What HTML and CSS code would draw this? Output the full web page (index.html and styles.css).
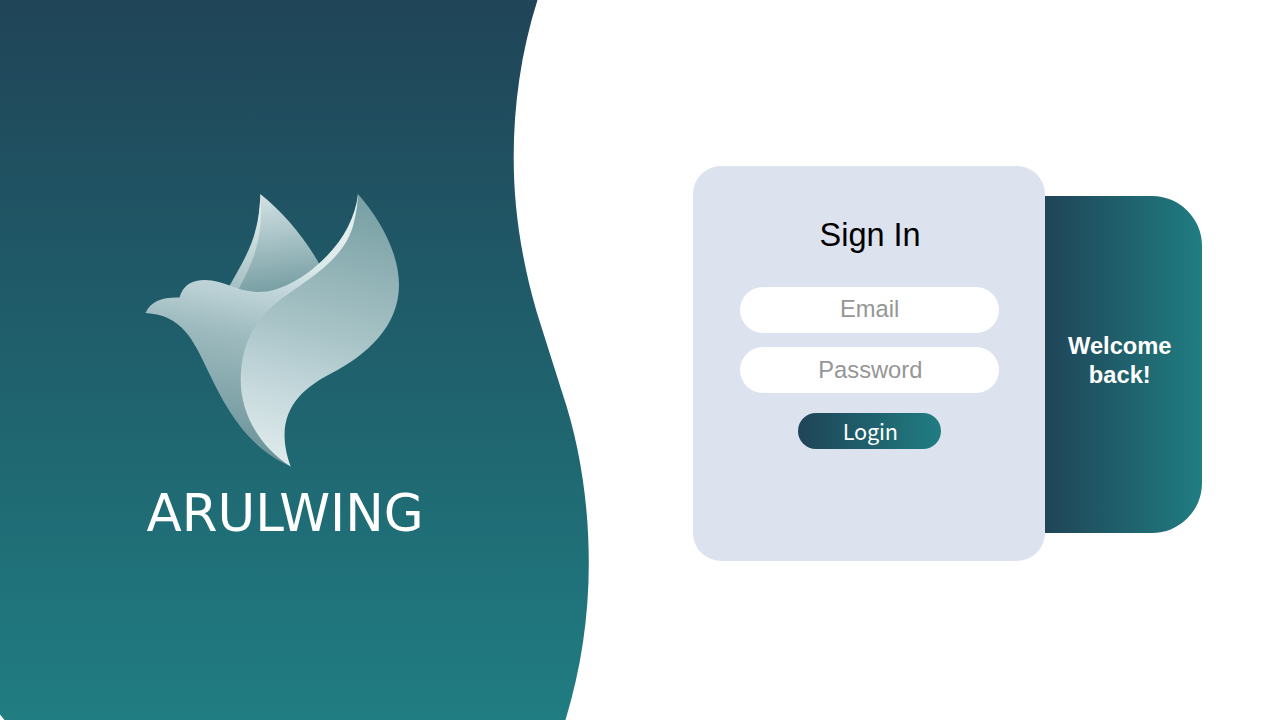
FILE: index.html
```html
<!DOCTYPE html>
<html lang="en">
<head>
<meta charset="utf-8">
<title>Arulwing – Sign In</title>
<link rel="stylesheet" href="styles.css">
</head>
<body>
<main class="page">
  <section class="brand">
    <svg class="brand-bg" viewBox="0 0 590 720" aria-hidden="true">
      <defs><linearGradient id="bg" x1="0" y1="0" x2="0" y2="1"><stop offset="0" stop-color="#204458"/><stop offset=".5" stop-color="#1f606c"/><stop offset="1" stop-color="#207d82"/></linearGradient></defs>
      <path fill="url(#bg)" d="M0 0H537.5C521 52 513.7 105 513.7 158C513.7 207 521 258 537 313L562 392C580 445 588.8 504 588.8 563C588.8 617 581 669 565.5 720H4.5L0 714.5Z"/>
    </svg>
    <div class="brand-inner">
      <svg class="logo" viewBox="140 190 264 280" role="img" aria-label="Bird">
        <defs>
          <linearGradient id="back" gradientUnits="userSpaceOnUse" x1="265" y1="194" x2="278" y2="292"><stop offset="0" stop-color="#d3e2e4"/><stop offset="1" stop-color="#769ea3"/></linearGradient>
          <linearGradient id="edge" gradientUnits="userSpaceOnUse" x1="262" y1="205" x2="236" y2="290"><stop offset="0" stop-color="#e3eeee"/><stop offset="1" stop-color="#a3bfc3"/></linearGradient>
          <linearGradient id="body" gradientUnits="userSpaceOnUse" x1="290" y1="230" x2="250" y2="450"><stop offset="0" stop-color="#e2eded"/><stop offset=".14" stop-color="#dce9e9"/><stop offset=".28" stop-color="#c1d5d9"/><stop offset=".5" stop-color="#9ebbbf"/><stop offset="1" stop-color="#6d959b"/></linearGradient>
          <linearGradient id="front" gradientUnits="userSpaceOnUse" x1="345" y1="205" x2="280" y2="460"><stop offset="0" stop-color="#7ba2a6"/><stop offset=".5" stop-color="#a9c4c7"/><stop offset=".75" stop-color="#c6d9dd"/><stop offset="1" stop-color="#deeaea"/></linearGradient>
        </defs>
        <path fill="url(#back)" d="M260.3 194C284 213 304 237 320 265L290 292L250 298L230 286C247 256 260 237 260.3 194Z"/>
        <path fill="url(#edge)" d="M260.3 194C259.5 237 245 258 229.5 286L238 290C252 264 264 240 260.3 194Z"/>
        <path fill="url(#body)" d="M145.5 313C151 301 162 297 179.500 297.500C183 285 192 280 205 280C224 280 237 292 259 292C279 292 302 279 319 263.500C341 244 355 220 358 194L360 230L275 340L262 438L290.700 466.500C249 448 228 413 209 373C193 339 182 315 145.500 313Z"/>
        <path fill="url(#front)" d="M358 194C378 217 399 251 399 285C399 326 367 355 331 373.500C299 390 272 415 290.700 466.500C257 445 240.700 411 240.700 380C240.700 347 253 323 275 304C301 282 345 263 354 222C356.500 212 357.700 203 358 194Z"/>
      </svg>
      <h1 class="brand-name">ARULWING</h1>
    </div>
  </section>
  <section class="auth">
    <form class="card">
      <h2 class="title">Sign In</h2>
      <input class="field" type="text" placeholder="Email" aria-label="Email">
      <input class="field field-password" type="password" placeholder="Password" aria-label="Password">
      <button class="login" type="button">Login</button>
    </form>
    <aside class="welcome">Welcome<br>back!</aside>
  </section>
</main>
</body>
</html>
```
FILE: styles.css
```css
* { box-sizing: border-box; }
body { margin: 0; background: #fff; font-family: "Liberation Sans", Arial, sans-serif; overflow: hidden; }
.page { display: flex; width: 1280px; height: 720px; }
.brand { position: relative; width: 590px; height: 720px; }
.brand-bg { position: absolute; inset: 0; width: 590px; height: 720px; }
.brand-inner { position: relative; display: flex; flex-direction: column; align-items: flex-start; padding: 190px 0 0 140px; }
.logo { width: 264px; height: 280px; }
.brand-name { margin: 13px 0 0 6.5px; font: 400 51.5px/60px "DejaVu Sans", sans-serif; color: #fff; white-space: nowrap; }
.auth { display: flex; align-items: flex-start; padding: 166.3px 0 0 103.2px; }
.card { display: flex; flex-direction: column; align-items: center; width: 352.3px; height: 394.5px; padding-top: 49px; border-radius: 28px; background: #dce2ee; }
.title { margin: 0 0 32.2px 1.5px; font-size: 32.5px; font-weight: 400; line-height: 40px; color: #000; }
.field { width: 259px; height: 46px; margin: 0 0 14px; padding: 0 0 2px .5px; border: 0; border-radius: 23px; background: #fff; font: 23.7px "Liberation Sans", Arial, sans-serif; text-align: center; outline: 0; }
.field-password { padding: 0 0 0 2px; }
.field::placeholder { color: #969696; opacity: 1; }
.login { width: 142.5px; height: 36.3px; margin-top: 5.5px; padding: 0 0 1px 2px; border: 0; border-radius: 18.2px; background: linear-gradient(90deg, #204458, #1f606c 50%, #207d82); color: #fff; font: 21.7px/34px "Noto Sans CJK SC", sans-serif; letter-spacing: -.2px; }
.welcome { display: flex; align-items: center; justify-content: center; width: 156.6px; height: 337.5px; margin-top: 29.5px; padding: 0 8px 8px 0; border-radius: 0 50px 50px 0; background: linear-gradient(90deg, #204458, #1f606c 50%, #207d82); color: #fff; font-size: 23.7px; font-weight: 700; line-height: 29px; text-align: center; }
```
